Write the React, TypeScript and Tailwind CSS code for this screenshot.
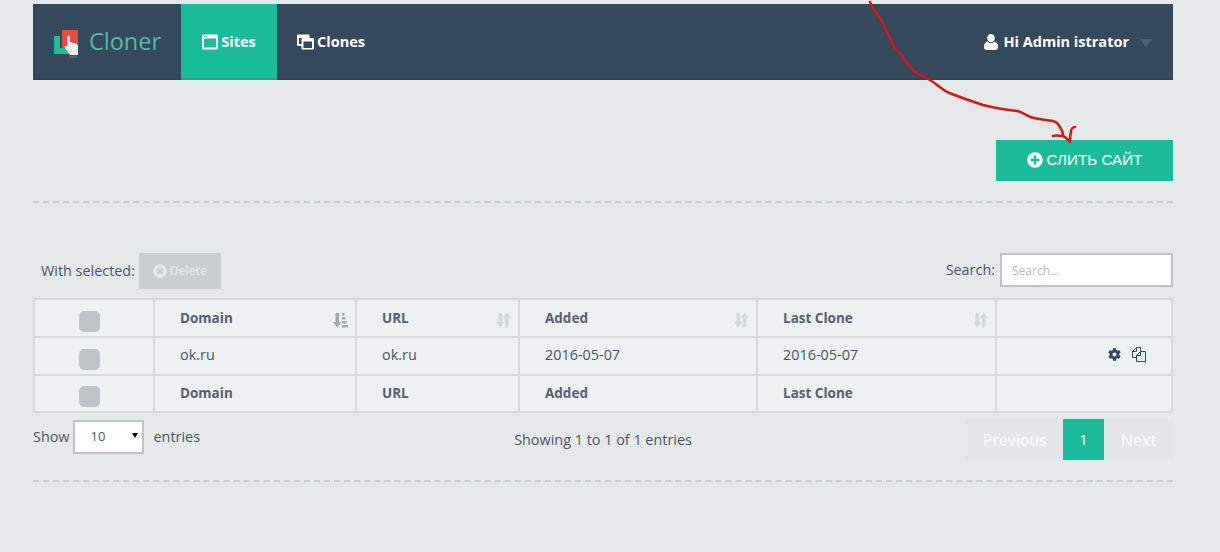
import { FaCog, FaPlusCircle, FaTimesCircle } from "react-icons/fa";

const columns = ["Domain", "URL", "Added", "Last Clone"];

function SortIcon({ active }: { active?: boolean }) {
  const color = active ? "#a3a9ae" : "#d3d8db";
  return (
    <svg viewBox="0 0 16 16" className="absolute right-[7px] top-[12px] h-4 w-4">
      <path d="M3.500 1h3.500v9h2.500L5.250 15.500 1 10h2.500z" fill={color} />
      {active ? (
        <path d="M10 1h2.500v2.500H10zM10 5h3.500v2.500H10zM10 9h4.500v2.500H10zM10 13h6v2.500h-6z" fill={color} />
      ) : (
        <path d="M10 15.500V6H7.500l4.250-5.500L16 6h-2.500v9.500z" fill={color} />
      )}
    </svg>
  );
}

function Checkbox() {
  return <span className="ml-[44px] mt-[6px] block h-[21px] w-[21px] rounded-[5px] bg-[#bdc3c7]" />;
}

function WindowIcon() {
  return (
    <svg viewBox="0 0 16 16" className="h-4 w-4">
      <path
        fillRule="evenodd"
        d="M1.500 0.500h13A1.500 1.500 0 0 1 16 2v12a1.500 1.500 0 0 1-1.500 1.500h-13A1.500 1.500 0 0 1 0 14V2A1.500 1.500 0 0 1 1.500 0.500zM2 4.500v9h12v-9zM2 1.800v1.200h1.200V1.800zM4.200 1.800v1.200h1.200V1.800z"
        fill="#fff"
      />
    </svg>
  );
}

function ClonesIcon() {
  return (
    <svg viewBox="0 0 17 16" className="h-4 w-[17px]">
      <path
        fillRule="evenodd"
        d="M1 0.500h10.500a1 1 0 0 1 1 1v2.500H16a1 1 0 0 1 1 1v9.500a1 1 0 0 1-1 1H5.500a1 1 0 0 1-1-1V12H1a1 1 0 0 1-1-1V1.500a1 1 0 0 1 1-1zM2 4v6h2.500V5a1 1 0 0 1 1-1zM6.500 7.500v6.500H15V7.500z"
        fill="#fff"
      />
    </svg>
  );
}

function UserIcon() {
  return (
    <svg viewBox="0 0 14 16" className="mr-[5px] h-4 w-[14px]">
      <path
        d="M7 0c2.200 0 3.800 1.700 3.800 4S9.200 8.200 7 8.200 3.200 6.300 3.200 4 4.800 0 7 0zM3.600 7.600C4.500 8.600 5.600 9.200 7 9.200s2.500-.6 3.400-1.600c2.200.4 3.600 2.400 3.600 5.400 0 2-1 3-2.600 3H2.600C1 16 0 15 0 13c0-3 1.400-5 3.600-5.400z"
        fill="#fff"
      />
    </svg>
  );
}

function CopyIcon() {
  return (
    <svg viewBox="0 0 15 15" className="h-[15px] w-[15px]" fill="none" stroke="#34495e" strokeWidth="1">
      <path d="M5.500 0.500h4v4M5.500 0.500 1.500 4.500v6h4" />
      <path d="M1.500 4.500h4v-4" />
      <path d="M9.500 4.500h5v10h-9V8.500z" />
      <path d="M5.500 8.500h4v-4" />
    </svg>
  );
}

function Logo() {
  return (
    <svg viewBox="0 0 30 34" className="h-[34px] w-[30px]">
      <path d="M2 12h6v12h10v6H2z" fill="#1abc9c" />
      <rect x="10" y="6" width="16" height="18" fill="#e74c3c" />
      <path d="M15.500 13c0-1.600 2.500-1.600 2.500 0v5l6 1.500c1.500.5 2 2 2 3.500v8h-8l-5-7c-1-1.800 1-2.800 2.500-1.500z" fill="#ecf0f1" />
      <rect x="17" y="31.500" width="8" height="2.500" fill="#4d6173" />
    </svg>
  );
}

export default function App() {
  return (
    <div className="relative min-h-[552px] overflow-hidden bg-[#e6e9ea] pt-1 font-['Open_Sans',sans-serif] text-[14.4px] text-[#4a5568]">
      <div className="ml-[33px] w-[1140px]">
        <nav className="flex h-[76px] items-stretch border-b-2 border-[#2f4256] bg-[#34495e] text-[14.5px] font-bold text-white">
          <div className="flex w-[148px] items-center pl-[19px]">
            <Logo />
            <span className="ml-[7px] mt-[2px] text-[23.500px] font-normal leading-none text-[#4dbfa6]">Cloner</span>
          </div>
          <a className="-mb-[2px] flex w-[96px] items-center justify-center gap-[3px] border-b-2 border-[#18ad90] bg-[#1abc9c] pt-[1px]">
            <WindowIcon />
            Sites
          </a>
          <a className="ml-[20px] flex items-center gap-[3px] pt-[1px]">
            <ClonesIcon />
            Clones
          </a>
          <div className="ml-auto flex items-center pr-[21px] pt-[1px]">
            <UserIcon />
            Hi Admin istrator
            <span className="ml-[11px] mt-[2px] h-0 w-0 border-x-[6.500px] border-t-[8px] border-x-transparent border-t-[#4d6173]" />
          </div>
        </nav>

        <div className="mt-[60px] flex justify-end">
          <button className="flex h-[41px] w-[177px] items-center justify-center gap-[4px] bg-[#1abc9c] pb-[1px] font-['Liberation_Sans',sans-serif] text-[15.200px] text-white">
            <FaPlusCircle className="h-4 w-4" />
            СЛИТЬ САЙТ
          </button>
        </div>

        <div className="mt-5 border-t-2 border-dashed border-[#c8cdd0]" />

        <div className="mt-[50px] flex h-[36px] items-center justify-between">
          <div className="flex items-center gap-[4px] pl-2">
            <span>With selected:</span>
            <button className="flex h-[36px] w-[82px] items-center justify-center gap-[3px] bg-[#c9ced1] text-[12px] font-semibold text-[#e6e9ea]">
              <FaTimesCircle className="h-[14px] w-[14px]" />
              Delete
            </button>
          </div>
          <label className="flex items-center gap-[5px] self-start">
            Search:
            <input
              placeholder="Search..."
              className="h-[34px] w-[173px] border-2 border-[#bdc3c7] bg-white px-[10px] text-[12px] outline-none placeholder:text-[#b2b8bc]"
            />
          </label>
        </div>

        <table className="mt-[9px] w-[1140px] table-fixed border-collapse border-2 border-[#d5d9db] bg-[#edf1f2]">
          <thead>
            <tr className="h-[38px]">
              <th className="w-[120px] border-2 border-[#d5d9db]">
                <Checkbox />
              </th>
              {columns.map((c, i) => (
                <th
                  key={c}
                  className={`relative border-2 border-[#d5d9db] pl-[25px] text-left text-[13.500px] font-bold text-[#566074] ${["w-[202px]", "w-[163px]", "w-[238px]", "w-[239px]"][i]}`}
                >
                  {c}
                  <SortIcon active={i === 0} />
                </th>
              ))}
              <th className="border-2 border-[#d5d9db]" />
            </tr>
          </thead>
          <tbody>
            <tr className="h-[38px]">
              <td className="border-2 border-[#d5d9db]">
                <Checkbox />
              </td>
              <td className="border-2 border-[#d5d9db] pb-[2px] pl-[25px]">ok.ru</td>
              <td className="border-2 border-[#d5d9db] pb-[2px] pl-[25px]">ok.ru</td>
              <td className="border-2 border-[#d5d9db] pb-[2px] pl-[25px]">2016-05-07</td>
              <td className="border-2 border-[#d5d9db] pb-[2px] pl-[25px]">2016-05-07</td>
              <td className="border-2 border-[#d5d9db] pb-[3px]">
                <div className="flex items-center justify-end gap-[10px] pr-[25px]">
                  <FaCog className="h-[13px] w-[13px] text-[#34495e]" />
                  <CopyIcon />
                </div>
              </td>
            </tr>
          </tbody>
          <tfoot>
            <tr className="h-[37px]">
              <th className="border-2 border-[#d5d9db]">
                <Checkbox />
              </th>
              {columns.map((c) => (
                <th key={c} className="border-2 border-[#d5d9db] pl-[25px] text-left text-[13.500px] font-bold text-[#566074]">
                  {c}
                </th>
              ))}
              <th className="border-2 border-[#d5d9db]" />
            </tr>
          </tfoot>
        </table>

        <div className="mt-[6px] grid h-[41px] grid-cols-3 items-center">
          <div className="flex items-center self-start pt-[1px]">
            <span>Show</span>
            <div className="relative ml-[3px] flex h-[34px] w-[71px] items-center border-2 border-[#bdc3c7] bg-white pl-[16px] text-[13px]">
              10
              <span className="absolute right-[4px] top-[11px] h-0 w-0 border-x-[3.500px] border-t-[5px] border-x-transparent border-t-black" />
            </div>
            <span className="ml-[10px]">entries</span>
          </div>
          <div className="text-center whitespace-nowrap">Showing 1 to 1 of 1 entries</div>
          <div className="flex justify-end text-[16px] font-semibold text-[#f7f8f9]">
            <span className="flex h-[41px] w-[97px] items-center justify-center bg-[#e3e6e8] tracking-[-0.4px]">Previous</span>
            <span className="flex h-[41px] w-[41px] items-center justify-center bg-[#1abc9c] text-[14px] font-normal text-white">1</span>
            <span className="flex h-[41px] w-[69px] items-center justify-center bg-[#e3e6e8] tracking-[-0.4px]">Next</span>
          </div>
        </div>

        <div className="mt-[20px] border-t-2 border-dashed border-[#c8cdd0]" />
      </div>

      {/* red marker arrow drawn over the page */}
      <svg
        viewBox="0 0 1220 552"
        className="pointer-events-none absolute inset-0 h-[552px] w-[1220px]"
        fill="none"
        stroke="#d81414"
        strokeWidth="2.500"
        strokeLinecap="round"
        strokeLinejoin="round"
      >
        <path d="M870 2c3 8 9 13 13 21 5 10 8 21 14 27 6 7 10 14 16 20 6 5 12 7 17 10 5 3 10 8 17 12 12 5 24 9 36 13 12 3 23 5 34 6 5 1 9 4 13 6 7 2 15 3 23 4 4 1 6 4 7 6 2 3 3 5 3 8" />
        <path d="M1053 136c4-1 7 0 10 0 3 1 5 4 7 6 0-4 0-7 1-10 0-3 2-5 4-5" />
      </svg>
    </div>
  );
}
